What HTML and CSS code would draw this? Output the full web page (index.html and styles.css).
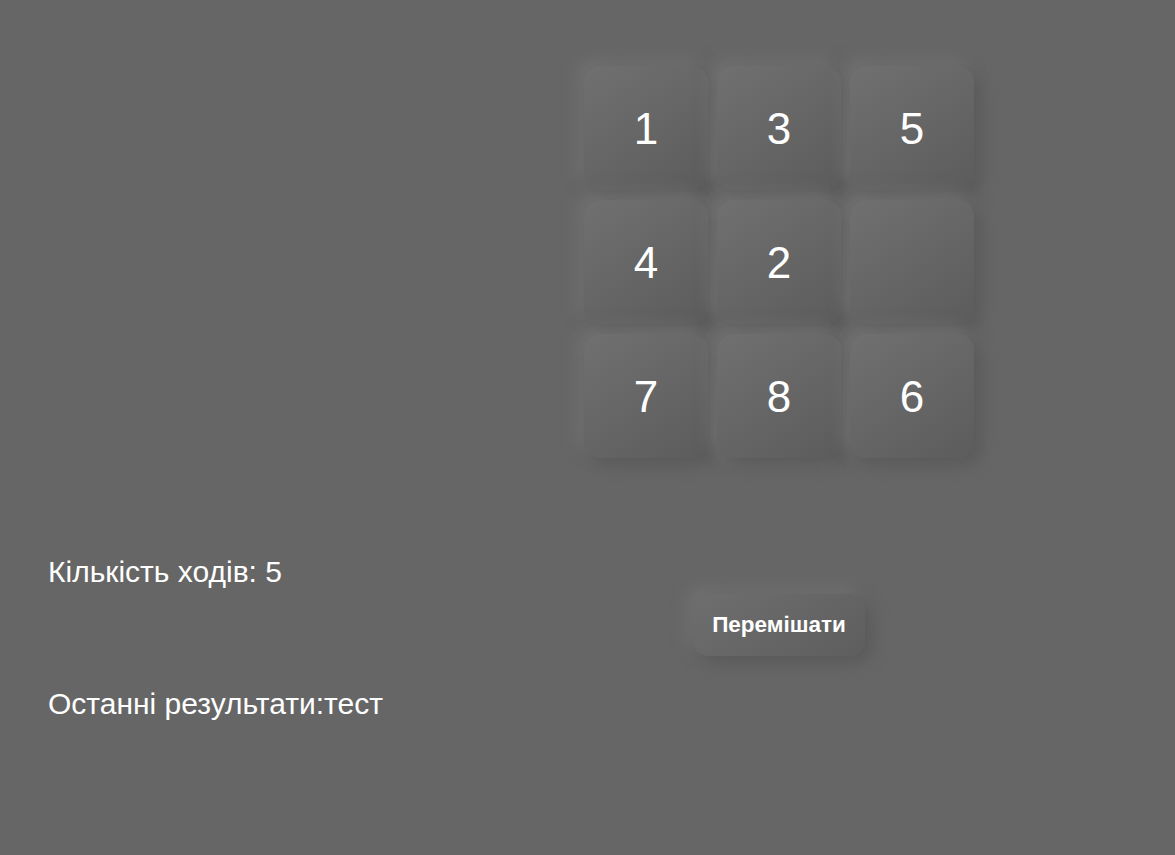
FILE: index.html
```html
<!DOCTYPE html>
<html lang="uk">
<head>
<meta charset="utf-8">
<title>П'ятнашки</title>
<link rel="stylesheet" href="styles.css">
</head>
<body>
<main class="page">
  <section class="info">
    <p class="moves">Кількість ходів: 5</p>
    <p class="results">Останні результати:тест</p>
  </section>
  <section class="game">
    <div class="board">
      <div class="tile">1</div>
      <div class="tile">3</div>
      <div class="tile">5</div>
      <div class="tile">4</div>
      <div class="tile">2</div>
      <div class="tile tile-empty"></div>
      <div class="tile">7</div>
      <div class="tile tile-raised">8</div>
      <div class="tile">6</div>
    </div>
    <button class="shuffle" type="button">Перемішати</button>
  </section>
</main>
</body>
</html>
```
FILE: styles.css
```css
html, body {
  margin: 0;
  padding: 0;
  background: #666666;
  font-family: "Liberation Sans", Arial, sans-serif;
  color: #ffffff;
}

.page {
  display: flex;
  width: 1175px;
  height: 855px;
}

.info {
  width: 335px;
  padding-left: 48px;
  padding-top: 554px;
  display: flex;
  flex-direction: column;
  gap: 96px;
}

.info p {
  margin: 0;
  font-size: 30px;
  line-height: 36px;
  white-space: nowrap;
}

.game {
  flex: 1;
  display: flex;
  flex-direction: column;
  align-items: center;
  padding-top: 66px;
}

.board {
  display: grid;
  grid-template-columns: repeat(3, 124px);
  grid-auto-rows: 124px;
  column-gap: 9px;
  row-gap: 10px;
}

.tile {
  display: flex;
  align-items: center;
  justify-content: center;
  border-radius: 16px;
  background: linear-gradient(145deg, #707070, #5c5c5c);
  box-shadow: 6px 6px 16px #595959, -6px -6px 16px #737373;
  font-size: 44px;
  padding-top: 2px;
  box-sizing: border-box;
  color: #ffffff;
}

.tile-raised {
  box-shadow: 6px 6px 16px #595959, -6px -6px 16px #737373, 0 12px 8px -2px #6b6b6b;
}

.shuffle {
  margin-top: 136px;
  width: 172px;
  height: 62px;
  border: none;
  border-radius: 16px;
  background: linear-gradient(145deg, #6e6e6e, #5e5e5e);
  box-shadow: 6px 6px 16px #595959, -6px -6px 16px #737373;
  color: #ffffff;
  font-family: "Liberation Sans", Arial, sans-serif;
  font-weight: bold;
  font-size: 22.5px;
  padding: 0;
}
```
